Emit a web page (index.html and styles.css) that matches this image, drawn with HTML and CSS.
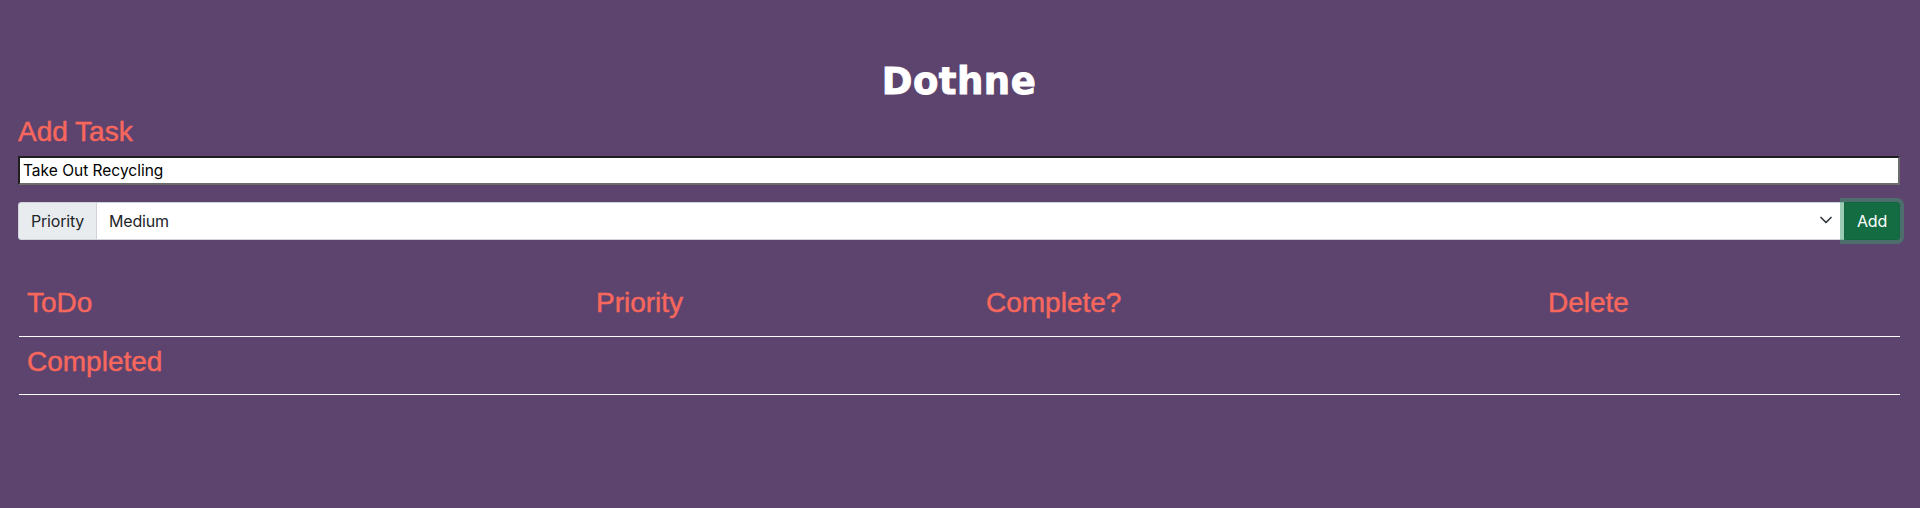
FILE: index.html
```html
<!DOCTYPE html>
<html lang="en">
<head>
<meta charset="utf-8">
<title>Dothne</title>
<link rel="stylesheet" href="styles.css">
</head>
<body>
<div class="app">
  <h1 class="brand">Dothne</h1>
  <h3 class="section-title">Add Task</h3>
  <input class="task-input" type="text" value="Take Out Recycling">
  <div class="input-group">
    <span class="ig-label">Priority</span>
    <div class="select-wrap">
      <select class="form-select">
        <option>Low</option>
        <option selected>Medium</option>
        <option>High</option>
      </select>
      <svg class="chevron" viewBox="0 0 12 8" width="12" height="8"><path d="M1 1.5 6 6.5 11 1.5" fill="none" stroke="#343a40" stroke-width="1.7" stroke-linecap="round" stroke-linejoin="round"/></svg>
    </div>
    <button class="btn-add" type="button">Add</button>
  </div>
  <table class="task-table">
    <colgroup>
      <col class="c1"><col class="c2"><col class="c3"><col class="c4">
    </colgroup>
    <thead>
      <tr>
        <th><h3 class="th-title">ToDo</h3></th>
        <th><h3 class="th-title">Priority</h3></th>
        <th><h3 class="th-title">Complete?</h3></th>
        <th><h3 class="th-title">Delete</h3></th>
      </tr>
    </thead>
    <tbody>
      <tr>
        <th colspan="4"><h3 class="th-title">Completed</h3></th>
      </tr>
    </tbody>
  </table>
</div>
</body>
</html>
```

FILE: styles.css
```css
* { box-sizing: border-box; }

html, body {
  margin: 0;
  background: #5c446f;
  font-family: Inter, "Liberation Sans", sans-serif;
  color: #212529;
}

.app {
  padding: 60px 20px 0 18px;
}

.brand {
  margin: 0 0 11px;
  text-align: center;
  font-family: "DejaVu Sans", sans-serif;
  font-weight: 700;
  font-size: 37px;
  letter-spacing: 0.5px;
  line-height: 1.2;
  color: #ffffff;
  -webkit-text-stroke: 0.9px #ffffff;
}

.section-title {
  margin: 0 0 7px;
  font-family: "Liberation Sans", Arial, sans-serif;
  font-size: 28px;
  font-weight: 400;
  line-height: 1.2;
  color: #f8675c;
  -webkit-text-stroke: 0.45px #f8675c;
}

.task-input {
  display: block;
  width: 100%;
  height: 29px;
  margin: 0 0 17px;
  padding: 3px 3px;
  font-family: Inter, "Liberation Sans", sans-serif;
  font-size: 15.5px;
  color: #000;
  background: #fff;
  border-width: 2px;
  border-style: solid;
  border-color: #1f1f1f #6b6b6b #6b6b6b #1f1f1f;
  border-radius: 0;
  outline: none;
}

.input-group {
  display: flex;
  align-items: stretch;
  height: 38px;
  margin-bottom: 38px;
}

.ig-label {
  display: flex;
  align-items: center;
  padding: 6px 12px;
  font-size: 16px;
  letter-spacing: -0.2px;
  line-height: 1.5;
  color: #212529;
  background: #e9ecef;
  border: 1px solid #ced4da;
  border-radius: 3px 0 0 3px;
}

.select-wrap {
  position: relative;
  flex: 1 1 auto;
  margin-left: -1px;
  display: flex;
}

.form-select {
  width: 100%;
  appearance: none;
  -webkit-appearance: none;
  padding: 6px 36px 6px 12px;
  font-family: Inter, "Liberation Sans", sans-serif;
  font-size: 16px;
  letter-spacing: -0.2px;
  line-height: 1.5;
  color: #212529;
  background: #fff;
  border: 1px solid #ced4da;
  border-radius: 0;
  outline: none;
}

.chevron {
  position: absolute;
  right: 13px;
  top: 14px;
  pointer-events: none;
}

.btn-add {
  position: relative;
  z-index: 2;
  margin-left: -1px;
  padding: 6px 12px;
  font-family: Inter, "Liberation Sans", sans-serif;
  font-size: 16px;
  letter-spacing: -0.2px;
  line-height: 1.5;
  color: #fff;
  background: #146c43;
  border: 1px solid #13653f;
  border-radius: 0 3px 3px 0;
  box-shadow: 0 0 0 4px rgba(60, 153, 110, 0.5);
}

.task-table {
  width: 1881px;
  margin-left: 1px;
  border-collapse: collapse;
  table-layout: fixed;
}

.c1 { width: 569px; }
.c2 { width: 390px; }
.c3 { width: 562px; }
.c4 { width: 360px; }

.task-table th {
  padding: 8px;
  text-align: left;
  font-weight: 500;
}

.task-table tr {
  border-bottom: 1px solid #ffffff;
}

.th-title {
  margin: 0 0 8px;
  font-family: "Liberation Sans", Arial, sans-serif;
  font-size: 28px;
  font-weight: 400;
  line-height: 1.2;
  color: #f8675c;
  -webkit-text-stroke: 0.45px #f8675c;
}
```
